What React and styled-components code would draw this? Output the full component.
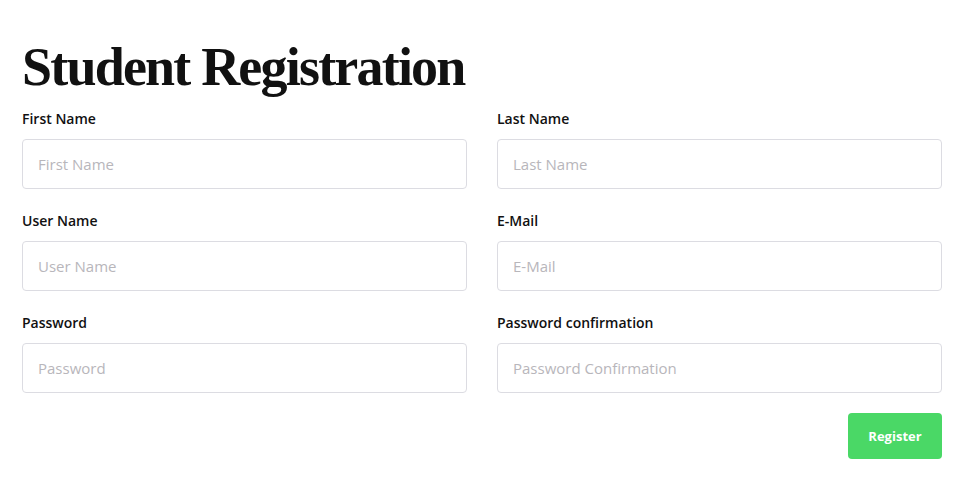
import React from 'react';
import styled, { createGlobalStyle } from 'styled-components';

const GlobalStyle = createGlobalStyle`
    body {
        margin: 0;
        background: #fff;
        font-family: "Open Sans", "Liberation Sans", sans-serif;
    }
`;

const Page = styled.div`
    padding: 37px 23px 20px 22px;
`;

const Title = styled.h1`
    margin: 0 0 12px;
    font-family: "Liberation Serif", "DejaVu Serif", serif;
    font-size: 54px;
    font-weight: bold;
    line-height: 60px;
    letter-spacing: -1.8px;
    color: #111;
`;

const Grid = styled.div`
    display: grid;
    grid-template-columns: 1fr 1fr;
    column-gap: 30px;
    row-gap: 22px;
`;

const Field = styled.div`
    display: flex;
    flex-direction: column;
    gap: 10px;
`;

const Label = styled.label`
    font-size: 14px;
    font-weight: 600;
    line-height: 20px;
    color: #111;
`;

const Input = styled.input`
    box-sizing: border-box;
    height: 50px;
    padding: 0 15px;
    border: 1px solid #dcdce2;
    border-radius: 4px;
    font-family: inherit;
    font-size: 15px;
    color: #111;
    outline: none;
    &::placeholder {
        color: #b8b6bb;
    }
`;

const Actions = styled.div`
    display: flex;
    justify-content: flex-end;
    margin-top: 20px;
`;

const Button = styled.button`
    width: 94px;
    height: 46px;
    border: none;
    border-radius: 4px;
    background: #4ad866;
    color: #fff;
    font-family: inherit;
    font-size: 13px;
    font-weight: 700;
    cursor: pointer;
`;

const fields = [
    ['First Name', 'First Name', 'text'],
    ['Last Name', 'Last Name', 'text'],
    ['User Name', 'User Name', 'text'],
    ['E-Mail', 'E-Mail', 'email'],
    ['Password', 'Password', 'password'],
    ['Password confirmation', 'Password Confirmation', 'password'],
];

export default function App() {
    return (
        <Page>
            <GlobalStyle />
            <Title>Student Registration</Title>
            <Grid>
                {fields.map(([label, placeholder, type]) => (
                    <Field key={label}>
                        <Label>{label}</Label>
                        <Input type={type} placeholder={placeholder} />
                    </Field>
                ))}
            </Grid>
            <Actions>
                <Button>Register</Button>
            </Actions>
        </Page>
    );
}
